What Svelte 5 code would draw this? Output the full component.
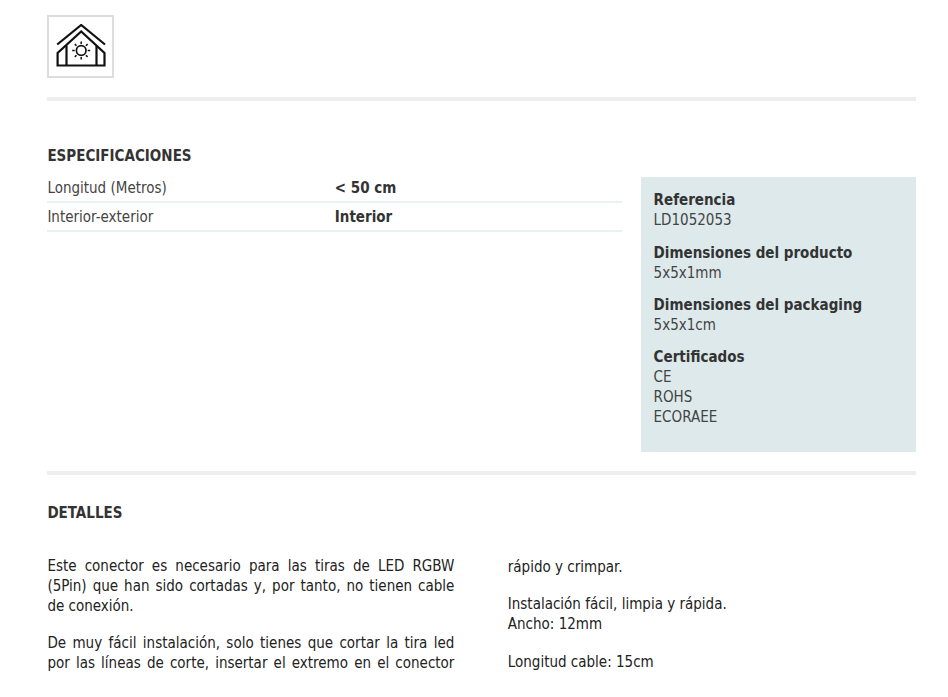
<script>
  const specs = [
    ['Longitud (Metros)', '< 50 cm'],
    ['Interior-exterior', 'Interior']
  ];
  const facts = [
    ['Referencia', ['LD1052053']],
    ['Dimensiones del producto', ['5x5x1mm']],
    ['Dimensiones del packaging', ['5x5x1cm']],
    ['Certificados', ['CE', 'ROHS', 'ECORAEE']]
  ];
</script>

<div class="page">
  <div class="iconbox">
    <svg width="50" height="46" viewBox="0 0 50 46" fill="none" stroke="#111" stroke-width="2.2">
      <path d="M1.2 20.5 L25.2 1 L49 20.5" />
      <path d="M1.6 41.5 V29 L25.2 7.5 L48.5 29 V41.5 Z" />
      <path d="M10.5 41.5 V21.5 M40.5 41.5 V21.5" />
      <circle cx="25.2" cy="26.5" r="4.8" stroke-width="1.7" />
      <path d="M25.2 17.5v2.5M25.2 33v2.5M16.2 26.5h2.5M31.7 26.5h2.5M18.8 20.1l1.7 1.7M29.9 31.2l1.7 1.7M31.6 20.1l-1.7 1.7M20.5 31.2l-1.7 1.7" stroke-width="1.5" />
    </svg>
  </div>
  <hr class="rule first" />
  <section class="specs">
    <div class="left">
      <h2>ESPECIFICACIONES</h2>
      {#each specs as [k, v]}
        <div class="row"><span class="k">{k}</span><b class="v">{v}</b></div>
      {/each}
    </div>
    <aside>
      {#each facts as [t, lines]}
        <div class="fact">
          <b>{t}</b>
          {#each lines as l}<span>{l}</span>{/each}
        </div>
      {/each}
    </aside>
  </section>
  <hr class="rule second" />
  <h2 class="det">DETALLES</h2>
  <div class="cols">
    <div class="col">
      <p>Este conector es necesario para las tiras de LED RGBW (5Pin) que han sido cortadas y, por tanto, no tienen cable de conexión.</p>
      <p class="cut">De muy fácil instalación, solo tienes que cortar la tira led por las líneas de corte, insertar el extremo en el conector</p>
    </div>
    <div class="col c2">
      <p>rápido y crimpar.</p>
      <p>Instalación fácil, limpia y rápida.<br />Ancho: 12mm</p>
      <p>Longitud cable: 15cm</p>
    </div>
  </div>
</div>

<style>
  :global(body) { margin: 0; background: #fff; overflow: hidden; }
  .page {
    height: 697px; overflow: hidden; box-sizing: border-box;
    padding: 15px 32px 0 47.4px;
    font-family: "DejaVu Sans Condensed", "DejaVu Sans", sans-serif; font-stretch: condensed;
    font-size: 15px; line-height: 20px; color: #444;
  }
  .iconbox {
    width: 67px; height: 63px; box-sizing: border-box; border: 2px solid #ddd;
    display: flex; align-items: center; justify-content: center;
  }
  .rule { border: 0; height: 4px; background: #eee; margin: 0; }
  .first { margin-top: 18.5px; }
  h2 { font-size: 15px; font-weight: 700; line-height: 20px; margin: 0; color: #333; }
  b { color: #333; }
  .specs { display: flex; margin-top: 45.5px; justify-content: space-between; align-items: flex-start; }
  .left { width: 575px; }
  .left h2 { margin-bottom: 8px; }
  .row { display: flex; height: 27px; line-height: 28px; border-bottom: 2px solid #e9f2f3; }
  .k { width: 287.4px; }
  .v { font-weight: 700; }
  aside {
    width: 275px; box-sizing: border-box; background: #dde9eb;
    margin-top: 31px; padding: 13px 13px 25px 12.6px; height: 275px;
  }
  .fact { margin-bottom: 12px; }
  .fact:first-child { margin-bottom: 13px; }
  .fact b, .fact span { display: block; }
  .second { margin-top: 19px; }
  .det { margin-top: 28px; }
  .cols { display: flex; gap: 53.4px; margin-top: 33px; color: #222; }
  .col { width: 407px; }
  .col p { margin: 0 0 17px; text-align: justify; }
  .cut { text-align-last: justify; }
  .c2 { padding-top: 1px; }
  .c2 p { margin-bottom: 18px; text-align: left; }
  .c2 p:first-child { margin-bottom: 17px; }
</style>
